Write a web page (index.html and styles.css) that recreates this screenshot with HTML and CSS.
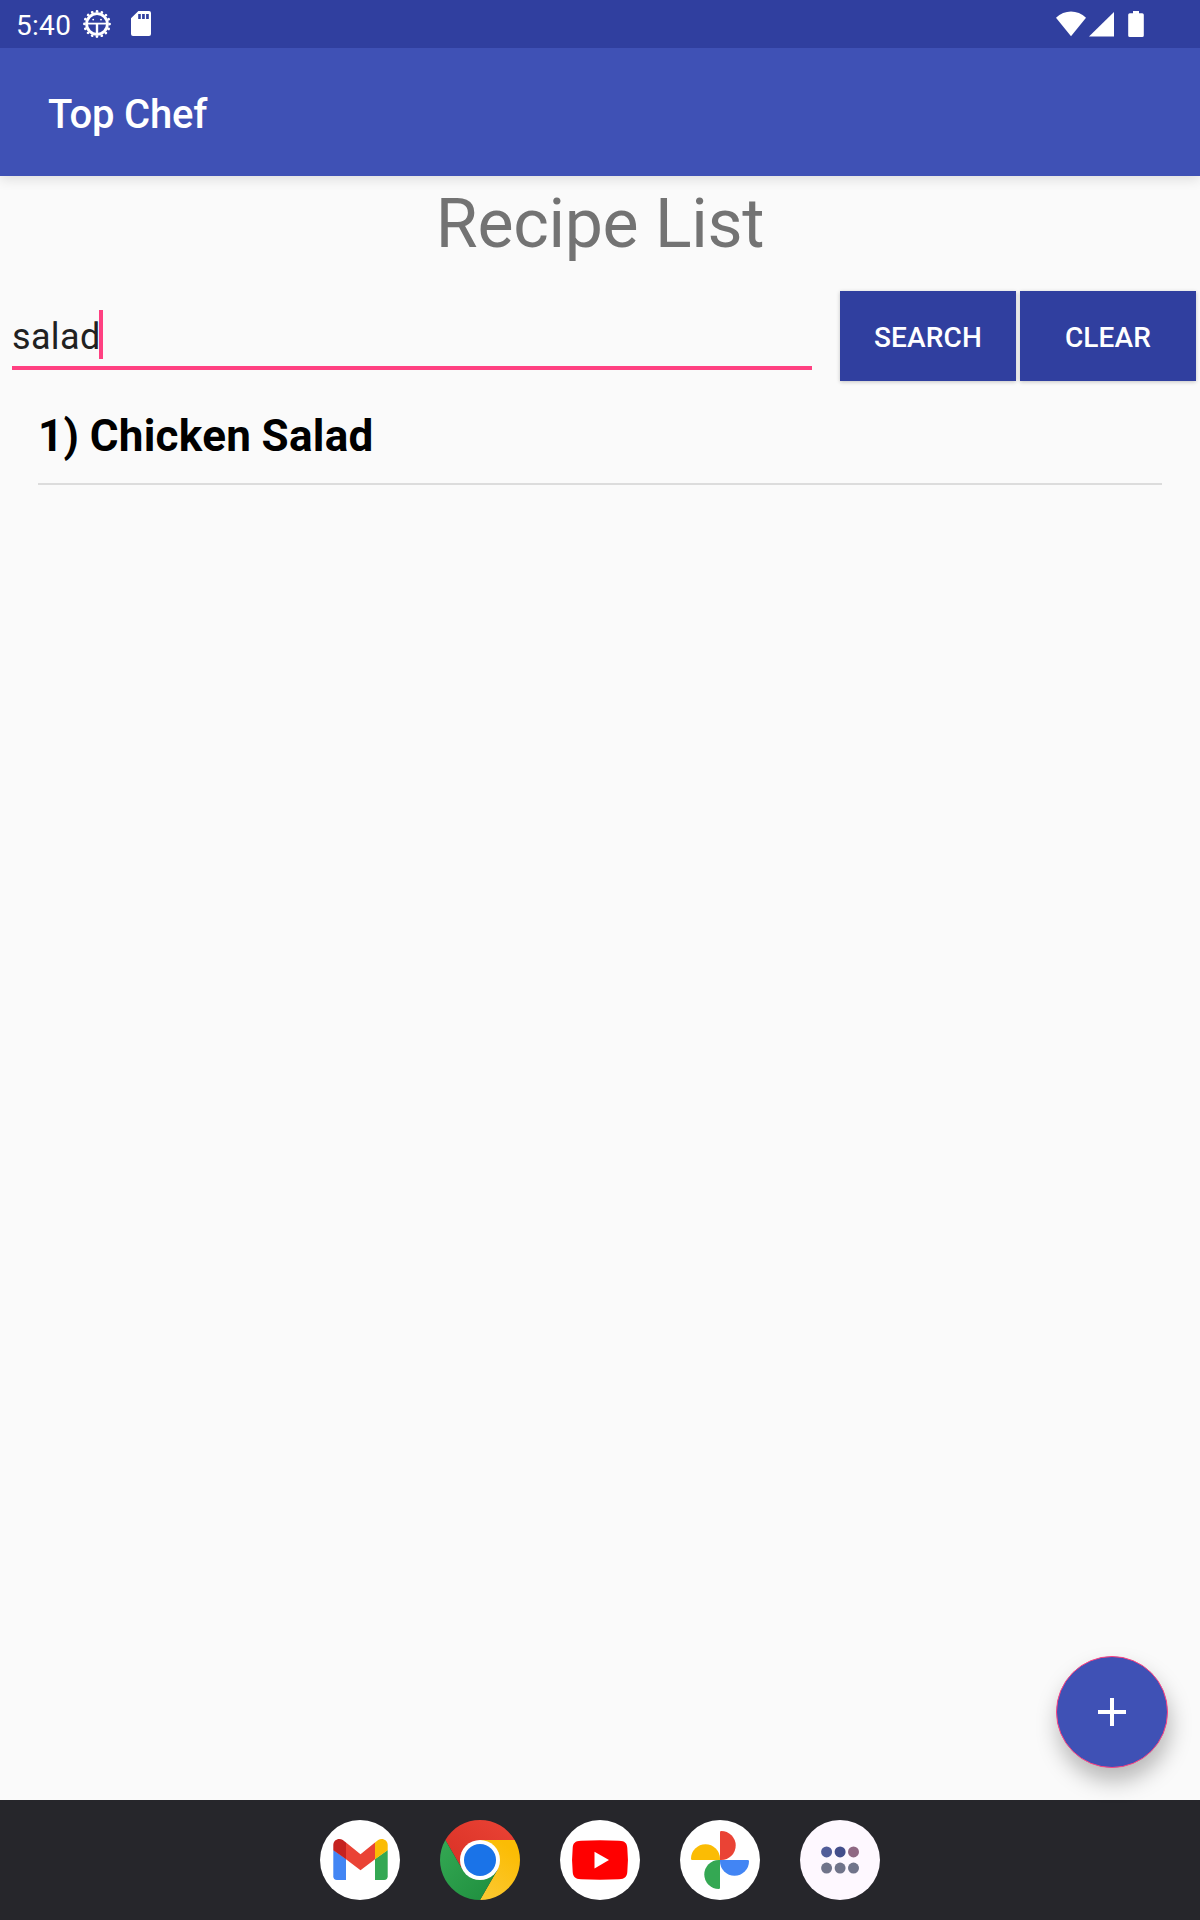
FILE: index.html
```html
<!DOCTYPE html>
<html lang="en">
<head>
<meta charset="utf-8">
<title>Top Chef</title>
<link rel="stylesheet" href="styles.css">
</head>
<body>
<div class="screen">
  <header class="top">
    <div class="status-bar">
      <span class="clock">5:40</span>
      <svg class="status-gear" width="28" height="28" viewBox="0 0 28 28">
        <circle cx="14" cy="14" r="12.6" pathLength="160" fill="none" stroke="#fff" stroke-width="2.7" stroke-linecap="round" stroke-dasharray=".2 9.8" stroke-dashoffset="0"/>
        <circle cx="14" cy="14" r="10.4" fill="none" stroke="#fff" stroke-width="2.8"/>
        <path d="M4 13.6h20" stroke="#fff" stroke-width="1.8"/>
        <path d="M14 14v10" stroke="#fff" stroke-width="2.4"/>
        <circle cx="10.2" cy="9.6" r=".9" fill="#fff"/><circle cx="18" cy="9.6" r=".9" fill="#fff"/>
      </svg>
      <svg class="status-card" width="20" height="26" viewBox="0 0 20 26">
        <path fill="#fff" fill-rule="evenodd" d="M7.4 0H18a2 2 0 0 1 2 2v21a2 2 0 0 1-2 2H2a2 2 0 0 1-2-2V7.2zM7.2 2.9v5.2h2.6v-5.2zM11.1 2.9v5.2h2.7v-5.2zM15.1 2.9v5.2h2.7v-5.2z"/>
      </svg>
      <svg class="status-signal" width="90" height="26" viewBox="0 0 90 26" fill="#fff">
        <path d="M0 6.8C8.5-1.7 21.5-1.7 30 6.8L15 25.3z"/>
        <path d="M33 25.5L58 1v24.5z"/>
        <path d="M77 0h6v2.2h3.2a1.6 1.6 0 0 1 1.6 1.6v20.6a1.6 1.6 0 0 1-1.6 1.6H73.8a1.6 1.6 0 0 1-1.6-1.6V3.8a1.6 1.6 0 0 1 1.6-1.6H77z"/>
      </svg>
    </div>
    <div class="app-bar">Top Chef</div>
  </header>

  <main class="content">
    <h1 class="title">Recipe List</h1>
    <div class="search-row">
      <div class="field"><span class="query">salad</span><span class="caret"></span></div>
      <button class="action">SEARCH</button>
      <button class="action">CLEAR</button>
    </div>
    <ul class="recipes">
      <li class="recipe">1) Chicken Salad</li>
    </ul>
    <button class="fab" aria-label="Add recipe">
      <svg width="28" height="28" viewBox="0 0 28 28"><path d="M12 0h4v12h12v4H16v12h-4V16H0v-4h12z" fill="#fff"/></svg>
    </button>
  </main>

  <nav class="dock">
    <svg class="app" viewBox="0 0 80 80">
      <circle cx="40" cy="40" r="40" fill="#fff"/>
      <path fill="#4285f4" d="M13.3 30L26 39v21H17a3.7 3.7 0 0 1-3.7-3.7z"/>
      <path fill="#34a853" d="M67.7 30L55 39v21h9a3.7 3.7 0 0 0 3.7-3.7z"/>
      <path fill="#ea4335" d="M26 22.5l14.5 11.8L55 22.5v16.8L40.5 50.2 26 39.3z"/>
      <path fill="#c5221f" d="M13.3 30.2V25c0-5.2 5.7-7.5 9.5-4.9l3.2 2.4v16.8z"/>
      <path fill="#fbbc04" d="M67.7 30.2V25c0-5.2-5.7-7.5-9.5-4.9L55 22.5v16.8z"/>
    </svg>
    <svg class="app" viewBox="0 0 80 80">
      <defs>
        <linearGradient id="red" x1="0" y1="1" x2="1" y2="0"><stop offset="0" stop-color="#d93025"/><stop offset="1" stop-color="#ea4335"/></linearGradient>
        <linearGradient id="yellow" x1="0" y1="1" x2=".5" y2="0"><stop offset="0" stop-color="#fcc934"/><stop offset="1" stop-color="#fbbc04"/></linearGradient>
        <linearGradient id="green" x1="1" y1="1" x2="0" y2="0"><stop offset="0" stop-color="#1e8e3e"/><stop offset="1" stop-color="#34a853"/></linearGradient>
      </defs>
      <path fill="url(#red)" d="M5.36 20A40 40 0 0 1 74.64 20H40L22.68 50z"/>
      <path fill="url(#yellow)" d="M74.64 20A40 40 0 0 1 40 80L57.32 50 40 20z"/>
      <path fill="url(#green)" d="M40 80A40 40 0 0 1 5.36 20L22.68 50H57.32z"/>
      <circle cx="40" cy="40" r="20" fill="#fff"/>
      <circle cx="40" cy="40" r="16" fill="#1a73e8"/>
    </svg>
    <svg class="app" viewBox="0 0 80 80">
      <circle cx="40" cy="40" r="40" fill="#fff"/>
      <path fill="red" d="M21 20.8Q40 19.9 59 20.8C65 21 66.9 23.2 67.3 28Q68.6 40 67.3 52C66.9 56.8 65 59 59 59.2Q40 60.1 21 59.2C15 59 13.1 56.8 12.7 52Q11.4 40 12.7 28C13.1 23.2 15 21 21 20.8z"/>
      <path fill="#fff" d="M34.5 31.8v16.6L49 40.1z"/>
    </svg>
    <svg class="app" viewBox="0 0 80 80">
      <circle cx="40" cy="40" r="40" fill="#fff"/>
      <path fill="#ea4335" d="M40 40V12.2q0-1.2 1.2-1.2a14.5 14.5 0 0 1 0 29z"/>
      <path fill="#4285f4" d="M40 40h27.8q1.2 0 1.2 1.2a14.5 14.5 0 0 1-29 0z"/>
      <path fill="#34a853" d="M40 40v27.8q0 1.2-1.2 1.2a14.5 14.5 0 0 1 0-29z"/>
      <path fill="#fbbc04" d="M40 40H12.2q-1.2 0-1.2-1.2a14.5 14.5 0 0 1 29 0z"/>
    </svg>
    <svg class="app" viewBox="0 0 80 80">
      <circle cx="40" cy="40" r="40" fill="#fef8ff"/>
      <circle cx="26.6" cy="31.9" r="5.5" fill="#515d99"/><circle cx="40.1" cy="31.9" r="5.5" fill="#434e8b"/><circle cx="53.5" cy="31.9" r="5.5" fill="#8f6883"/>
      <g fill="#70748a"><circle cx="26.6" cy="48.1" r="5.5"/><circle cx="40.1" cy="48.1" r="5.5"/><circle cx="53.5" cy="48.1" r="5.5"/></g>
    </svg>
  </nav>
</div>
</body>
</html>
```
FILE: styles.css
```css
* { box-sizing: border-box; }
body { margin: 0; font-family: Roboto, sans-serif; }
button { border: 0; padding: 0; font-family: inherit; }

.screen {
  display: flex;
  flex-direction: column;
  width: 1200px;
  height: 1920px;
  background: #fafafa;
}

.top { box-shadow: 0 3px 12px rgba(0, 0, 0, .12); }
.status-bar {
  display: flex;
  align-items: flex-start;
  height: 48px;
  padding: 0 54px 0 16px;
  background: #303f9f;
  color: #fff;
}
.clock { width: 67px; font-size: 28px; letter-spacing: .3px; line-height: 52px; }
.status-gear { margin-top: 10px; overflow: visible; }
.status-card { margin: 11px 0 0 20px; }
.status-signal { margin: 11px 0 0 auto; }
.app-bar {
  height: 128px;
  padding-left: 48px;
  background: #3f51b5;
  color: #fff;
  font-size: 40px;
  font-weight: 500;
  letter-spacing: -.2px;
  line-height: 134px;
}

.content { position: relative; flex: 1; }
.title {
  margin: 0;
  height: 115px;
  color: #737373;
  font-size: 68px;
  font-weight: 400;
  letter-spacing: -.3px;
  line-height: 96px;
  text-align: center;
}
.search-row {
  display: flex;
  gap: 4px;
  height: 90px;
  padding: 0 4px 0 12px;
}
.field {
  display: flex;
  flex: none;
  align-items: flex-start;
  width: 800px;
  height: 79px;
  margin-right: 20px;
  border-bottom: 4px solid #ff4081;
}
.query {
  width: 87px;
  color: #212121;
  font-size: 36px;
  letter-spacing: .35px;
  line-height: 92px;
}
.caret { width: 4px; height: 49px; margin-top: 19px; background: #ff4081; }
.action {
  flex: 0 0 176px;
  height: 90px;
  padding-top: 1px;
  background: #303f9f;
  color: #fff;
  box-shadow: 0 1px 4px rgba(0, 0, 0, .22);
  font-size: 28px;
  font-weight: 500;
  letter-spacing: .15px;
  line-height: 92px;
}
.action:first-of-type { margin-left: 4px; }
.recipes { margin: 0; padding: 0 38px; list-style: none; }
.recipe {
  height: 104px;
  border-bottom: 2px solid #dcdcdc;
  color: #000;
  font-size: 44px;
  font-weight: 700;
  letter-spacing: .3px;
  line-height: 110px;
  word-spacing: -.9px;
}

.fab {
  position: absolute;
  right: 32px;
  bottom: 32px;
  display: flex;
  align-items: center;
  justify-content: center;
  width: 112px;
  height: 112px;
  border: 1px solid #ff4081;
  border-radius: 50%;
  background: #3f51b5;
  box-shadow: 2px 13px 22px rgba(0, 0, 0, .27);
}

.dock {
  display: flex;
  justify-content: center;
  gap: 40px;
  height: 120px;
  padding-top: 20px;
  background: #26262b;
}
.app { width: 80px; height: 80px; }
```
